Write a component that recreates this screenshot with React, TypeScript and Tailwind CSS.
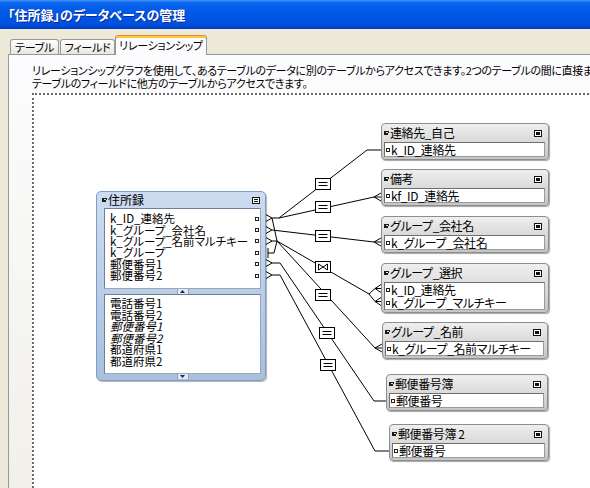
import React from 'react';

// canvas origin in page coordinates (inside the dotted border)
const OX = 37;
const OY = 94;

type Rel = { name: string; x: number; y: number; w: number; fields: string[] };

const related: Rel[] = [
  { name: '連絡先_自己', x: 384, y: 122, w: 168, fields: ['k_ID_連絡先'] },
  { name: '備考', x: 384, y: 168, w: 168, fields: ['kf_ID_連絡先'] },
  { name: 'グループ_会社名', x: 384, y: 215, w: 168, fields: ['k_グループ_会社名'] },
  { name: 'グループ_選択', x: 384, y: 262, w: 168, fields: ['k_ID_連絡先', 'k_グループ_マルチキー'] },
  { name: 'グループ_名前', x: 385, y: 321, w: 166, fields: ['k_グループ_名前マルチキー'] },
  { name: '郵便番号簿', x: 389, y: 373, w: 162, fields: ['郵便番号'] },
  { name: '郵便番号簿 2', x: 392, y: 423, w: 160, fields: ['郵便番号'] },
];

const mainFields = ['k_ID_連絡先', 'k_グループ_会社名', 'k_グループ_名前マルチキー', 'k_グループ', '郵便番号1', '郵便番号2'];
const otherFields: { name: string; italic?: boolean }[] = [
  { name: '電話番号1' },
  { name: '電話番号2' },
  { name: '郵便番号1', italic: true },
  { name: '郵便番号2', italic: true },
  { name: '都道府県1' },
  { name: '都道府県2' },
];

function PinIcon() {
  return (
    <svg width="5" height="5" viewBox="0 0 5 5" className="shrink-0 mr-[1px]">
      <path d="M0 0h5v2h-1v-1h-2v3h-2z" fill="#1a1a1a" />
      <path d="M2 2h2v2h-2z" fill="#1a1a1a" />
    </svg>
  );
}

function CollapseIcon({ lines }: { lines?: boolean }) {
  return (
    <svg width="8" height="7" viewBox="0 0 8 7" className="shrink-0">
      <rect x="0.5" y="0.5" width="7" height="6" fill="#fff" stroke="#111" />
      {lines ? (
        <path d="M2 2.5h4M2 4.5h4" stroke="#111" />
      ) : (
        <rect x="2" y="2" width="4" height="3" fill="#111" />
      )}
    </svg>
  );
}

function Port() {
  return <span className="w-[4px] h-[4px] border border-[#222] bg-white shrink-0" />;
}

function RelTable({ t }: { t: Rel }) {
  return (
    <div
      className="absolute rounded-[4px] border border-[#8d8d8d] bg-gradient-to-b from-[#efefef] to-[#c6c6c6] pl-[2px] pr-[3px] pb-[2px] shadow-[1px_1px_1px_rgba(0,0,0,0.35)]"
      style={{ left: t.x - OX, top: t.y - OY, width: t.w }}
    >
      <div className="h-[18px] flex items-center justify-between pr-[3px]">
        <span className="flex items-center text-[12px] leading-[12px] tracking-[-0.4px] text-black whitespace-nowrap">
          <PinIcon />
          {t.name}
        </span>
        <CollapseIcon />
      </div>
      <div className="bg-white border border-[#9a9a9a] border-t-[#6e6e6e] border-l-[#6e6e6e]">
        {t.fields.map(f => (
          <div key={f} className="h-[13px] flex items-center gap-[1px] pl-[1px] text-[12px] leading-[12px] tracking-[-0.4px] whitespace-nowrap">
            <Port />
            <span>{f}</span>
          </div>
        ))}
      </div>
    </div>
  );
}

function ScrollNub({ up }: { up?: boolean }) {
  return (
    <div className="h-[5px] flex justify-center">
      <div className="w-[12px] h-[5px] bg-[#dfe8f4] border-x border-[#8ea6c6] flex items-center justify-center">
        <svg width="5" height="3" viewBox="0 0 5 3">
          <path d={up ? 'M0 3L2.5 0L5 3z' : 'M0 0L2.5 3L5 0z'} fill="#1a2a40" />
        </svg>
      </div>
    </div>
  );
}

function MainTable() {
  return (
    <div
      className="absolute rounded-[5px] border border-[#7e9cc5] bg-gradient-to-b from-[#cddcf0] to-[#a8c0de] pl-[7px] pr-[4px] shadow-[1px_1px_1px_rgba(0,0,0,0.3)]"
      style={{ left: 99 - OX, top: 190 - OY, width: 170, height: 190 }}
    >
      <div className="h-[16px] flex items-center justify-between -ml-[2px] pr-[1px]">
        <span className="flex items-center text-[12px] leading-[12px]">
          <PinIcon />
          住所録
        </span>
        <CollapseIcon lines />
      </div>
      <div className="h-[81px] bg-white border border-[#9aa8ba] border-t-[#6f7f94] border-l-[#6f7f94] pt-[4px] pl-[5px] pr-[1px] overflow-hidden">
        {mainFields.map(f => (
          <div key={f} className="h-[11.4px] flex items-center justify-between text-[11.5px] leading-[11px] whitespace-nowrap">
            <span>{f}</span>
            <Port />
          </div>
        ))}
      </div>
      <ScrollNub up />
      <div className="h-[80px] bg-white border border-[#9aa8ba] border-t-[#6f7f94] border-l-[#6f7f94] pt-[3px] pl-[5px] overflow-hidden">
        {otherFields.map((f, i) => (
          <div key={i} className={`h-[11.5px] flex items-center text-[11.5px] leading-[11px] whitespace-nowrap ${f.italic ? 'italic' : ''}`}>
            {f.name}
          </div>
        ))}
      </div>
      <ScrollNub />
    </div>
  );
}

function EqBox({ x, y, cross }: { x: number; y: number; cross?: boolean }) {
  const l = x - 7.5;
  const t = y - 5.5;
  return (
    <g>
      <rect x={l} y={t} width="15" height="11" fill="#fff" stroke="#000" />
      {cross ? (
        <path
          d={`M${l + 3} ${t + 2.5}V${t + 8.5}L${l + 12} ${t + 2.5}V${t + 8.5}L${l + 3} ${t + 2.5}`}
          fill="none"
          stroke="#000"
        />
      ) : (
        <path d={`M${l + 3} ${t + 4}H${l + 12}M${l + 3} ${t + 7}H${l + 12}`} stroke="#000" />
      )}
    </g>
  );
}

// "<" fork at a related table, apex at (ax, y), prongs reach the table edge ex
function foot(ax: number, ex: number, y: number) {
  return `M${ex} ${y - 4}L${ax} ${y}L${ex} ${y + 4}M${ax} ${y}H${ex}`;
}

function Lines() {
  const mainFeet = [217, 229, 240, 262, 274]
    .map(y => `M268 ${y - 4}L275 ${y}L268 ${y + 4}`)
    .join('');
  const d = [
    mainFeet,
    // k_ID_連絡先
    'M275 217H282L370 149H384',
    'M282 217L377 196',
    foot(377, 384, 196),
    'M275 217L280 240',
    // k_グループ_会社名
    'M275 229L377 241',
    foot(377, 384, 241),
    // k_グループ_名前マルチキー
    'M275 240H280L372 293',
    'M372 293L378 287.5',
    'M372 293L378 300.5',
    foot(378, 384, 287.5),
    foot(378, 384, 300.5),
    'M280 240L378 347',
    foot(378, 385, 347),
    // k_グループ
    'M271 247V257M271 252H277L280 240',
    // 郵便番号
    'M275 262H283L377 400H389',
    'M275 274H283L378 450H392',
  ].join('');
  return (
    <svg className="absolute left-0 top-0 overflow-visible" width="600" height="420">
      <g transform={`translate(${-OX} ${-OY})`}>
        <path d={d} fill="none" stroke="#000" strokeWidth="1" />
        <EqBox x={326} y={183} />
        <EqBox x={326} y={206} />
        <EqBox x={326} y={235} />
        <EqBox x={326} y={266} cross />
        <EqBox x={326} y={294} />
        <EqBox x={330} y={332} />
        <EqBox x={331} y={364} />
      </g>
    </svg>
  );
}

function Tab({ label, active, className }: { label: string; active?: boolean; className: string }) {
  return (
    <div
      className={`${className} flex items-center justify-center text-[11px] leading-[11px] tracking-[-0.3px] whitespace-nowrap text-black rounded-t-[3px] border border-b-0 ${
        active
          ? 'h-[20px] -mb-px relative z-10 bg-[#fcfcfe] border-[#919b9c] border-t-[#e68b2c] shadow-[inset_0_2px_0_#ffc73c]'
          : 'h-[15px] bg-gradient-to-b from-[#ffffff] to-[#e8e7e0] border-[#919b9c]'
      }`}
    >
      {label}
    </div>
  );
}

export default function App() {
  return (
    <div className="w-[590px] h-[488px] overflow-hidden flex flex-col bg-[#ece9d8] font-['Noto_Sans_CJK_JP','Noto_Sans',sans-serif] [font-feature-settings:'palt']">
      {/* Title bar */}
      <div className="h-[29px] shrink-0 flex items-center pl-[8px] bg-[linear-gradient(to_bottom,#3f93ff_0%,#0a64ec_10%,#0058e6_45%,#0052e0_80%,#003cc4_100%)] text-white font-bold text-[13px] [text-shadow:1px_1px_0_#0a2a9a]">
        「住所録」のデータベースの管理
      </div>

      <div className="flex-1 flex min-h-0">
        <div className="w-[3px] bg-[#0a46e0]" />
        <div className="flex-1 flex flex-col pl-[8px] pt-[6px] min-h-0">
          {/* Tabs */}
          <div className="h-[19px] flex items-end pl-[2px]">
            <Tab label="テーブル" className="w-[49px]" />
            <Tab label="フィールド" className="w-[55px] ml-[1px]" />
            <Tab label="リレーションシップ" active className="w-[92px]" />
          </div>

          {/* Panel */}
          <div className="flex-1 flex flex-col border-l border-t border-[#919b9c] bg-gradient-to-b from-[#fcfcfe] to-[#f1f0ea] pl-[23px] pt-[9px] min-h-0 overflow-hidden">
            <div className="text-[11px] leading-[13px] tracking-[-0.35px] text-black whitespace-nowrap">
              <p>リレーションシップグラフを使用して、あるテーブルのデータに別のテーブルからアクセスできます。2つのテーブルの間に直接ま</p>
              <p>テーブルのフィールドに他方のテーブルからアクセスできます。</p>
            </div>

            {/* Graph canvas */}
            <div className="relative flex-1 mt-[3px] bg-white border-l-2 border-t-2 border-dotted border-[#6a6a6a]">
              <Lines />
              <MainTable />
              {related.map(t => (
                <RelTable key={t.name} t={t} />
              ))}
            </div>
          </div>
        </div>
      </div>
    </div>
  );
}
